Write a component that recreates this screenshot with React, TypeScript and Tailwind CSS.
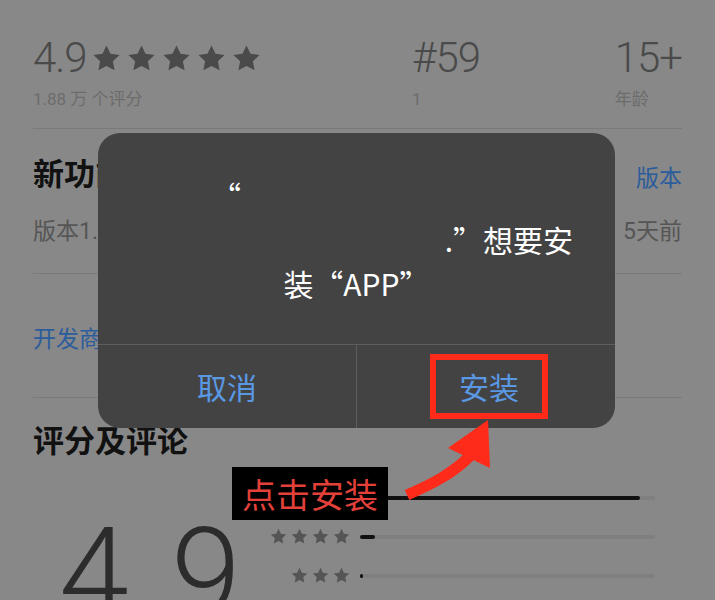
import React from 'react';

function Star({ className }: { className: string }) {
  return (
    <svg viewBox="0 0 24 24" className={className} fill="currentColor">
      <path d="M12 1.2l3.3 6.9 7.5 1-5.5 5.2 1.4 7.5L12 18.2l-6.7 3.6 1.4-7.5-5.5-5.2 7.5-1z" />
    </svg>
  );
}

function Stars({ n, size }: { n: number; size: 'lg' | 'sm' }) {
  const cls = size === 'lg' ? 'w-[29px] h-[29px]' : 'w-[17px] h-[17px]';
  return (
    <div className={size === 'lg' ? 'flex gap-[6px]' : 'flex gap-[4px]'}>
      {Array.from({ length: n }).map((_, i) => (
        <Star key={i} className={cls} />
      ))}
    </div>
  );
}

const bars = [
  { stars: 5, fill: 95 },
  { stars: 4, fill: 5 },
  { stars: 3, fill: 1 },
];

export default function App() {
  return (
    <div className="relative w-[715px] h-[600px] overflow-hidden bg-[#888888] font-['Roboto','Noto_Sans_CJK_SC',sans-serif]">
      {/* page under the alert */}
      <div className="px-[33px] pt-[37px]">
        <div className="flex">
          <div className="w-[379px]">
            <div className="flex items-center gap-[5px] text-[#4a4a4a]">
              <span className="text-[42px] leading-none font-light tracking-[-1px]">4.9</span>
              <Stars n={5} size="lg" />
            </div>
            <div className="mt-[12px] text-[17px] leading-none text-[#6c6c6c]">1.88 万 个评分</div>
          </div>
          <div className="flex-1">
            <div className="text-[42px] leading-none font-light text-[#4a4a4a] tracking-[-1px]">#59</div>
            <div className="mt-[12px] text-[17px] leading-none text-[#6c6c6c]">1</div>
          </div>
          <div className="flex flex-col items-end">
            <div className="text-[42px] leading-none font-light text-[#4a4a4a] tracking-[-1px]">15+</div>
            <div className="mt-[12px] text-[17px] leading-none text-[#6c6c6c] self-start">年龄</div>
          </div>
        </div>
        <div className="mt-[20px] h-px bg-[#7a7a7a]" />

        <div className="mt-[30px] flex items-end justify-between">
          <span className="text-[31px] font-bold leading-none text-[#111]">新功能</span>
          <span className="text-[23px] leading-none text-[#2b5c9c]">版本</span>
        </div>
        <div className="mt-[30px] flex justify-between text-[23px] leading-none text-[#555]">
          <span>版本1.0.0</span>
          <span>5天前</span>
        </div>
        <div className="mt-[30px] h-px bg-[#7a7a7a]" />

        <div className="mt-[54px] text-[23px] leading-none text-[#2b5c9c]">开发商</div>
        <div className="mt-[46px] h-px bg-[#7a7a7a]" />

        <div className="mt-[28px] text-[31px] font-bold leading-none text-[#111]">评分及评论</div>

        <div className="mt-[32px] flex">
          <div className="w-[227px] pt-[22px] pl-[26px]">
            <span className="text-[126px] leading-none font-light text-[#2c2c2c] tracking-[6px]">4.9</span>
          </div>
          <div className="flex-1 flex flex-col gap-[22px] pr-[27px]">
            {bars.map((b) => (
              <div key={b.stars} className="flex items-center gap-[10px] h-[17px]">
                <div className="w-[90px] flex justify-end text-[#555]">
                  <Stars n={b.stars} size="sm" />
                </div>
                <div className="flex-1 h-[4px] bg-[#7f7f7f] rounded-full">
                  <div className="h-full bg-[#111] rounded-full" style={{ width: `${b.fill}%` }} />
                </div>
              </div>
            ))}
          </div>
        </div>
      </div>

      {/* install alert */}
      <div className="absolute left-[98px] top-[133px] w-[517px] h-[295px] rounded-[22px] bg-[#434343] flex flex-col overflow-hidden">
        <div className="flex-1 flex flex-col pt-[40px] text-[30px] leading-[44px] text-white font-['Noto_Sans_CJK_SC',sans-serif]">
          <div className="pl-[113px]">“</div>
          <div className="flex justify-end pr-[42px]">
            <span>.”想要安</span>
          </div>
          <div className="text-center">装“APP”</div>
        </div>
        <div className="h-[84px] flex border-t border-[#5e5e5e]">
          <div className="flex-1 flex items-center justify-center text-[30px] text-[#5a98e4] font-['Noto_Sans_CJK_SC',sans-serif] border-r border-[#5e5e5e]">
            取消
          </div>
          <div className="flex-1 flex items-center justify-center">
            <div className="w-[118px] h-[65px] border-[6px] border-[#ff2b1a] flex items-center justify-center text-[30px] text-[#5a98e4] font-['Noto_Sans_CJK_SC',sans-serif] ml-[6px]">
              安装
            </div>
          </div>
        </div>
      </div>

      {/* annotation */}
      <div className="absolute left-[232px] top-[467px] w-[156px] h-[53px] bg-black flex items-center justify-center text-[34px] leading-none text-[#e4403a] font-['Noto_Sans_CJK_SC',serif]">
        点击安装
      </div>
      <svg className="absolute left-[380px] top-[400px]" width="140" height="110" viewBox="0 0 140 110">
        <path d="M27 95 C52 84 72 74 90 56" stroke="#ff2b1a" strokeWidth="11" fill="none" />
        <polygon points="108,20 68,48 110,68" fill="#ff2b1a" />
      </svg>
    </div>
  );
}
